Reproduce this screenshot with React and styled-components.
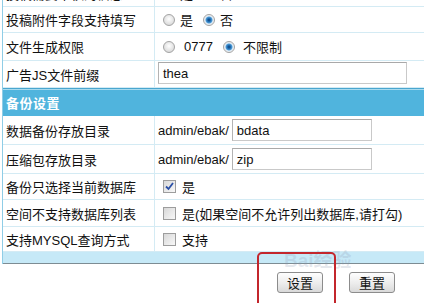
import React from "react";
import styled, { createGlobalStyle, css } from "styled-components";

const GlobalStyle = createGlobalStyle`
  html, body {
    margin: 0;
    padding: 0;
    background: #fff;
    overflow: hidden;
  }
  body {
    font-family: "Liberation Sans", "Noto Sans CJK SC", sans-serif;
    font-size: 13px;
    color: #111;
  }
`;

const StyledPage = styled.div`
  width: 440px;
  height: 303px;
  position: relative;
  overflow: hidden;
`;

const StyledTable = styled.div`
  margin-left: 2px;
  margin-top: -20px;
  border-left: 1px solid #8fcde6;
`;

const Row = styled.div`
  display: grid;
  grid-template-columns: 152px 1fr;
  height: ${({ $h }) => $h || 26}px;
  border-bottom: 1px solid #d4ebf4;
`;

const Label = styled.div`
  box-sizing: border-box;
  display: flex;
  align-items: center;
  padding-left: 3px;
  border-right: 1px solid #d4ebf4;
  white-space: nowrap;
`;

const Value = styled.div`
  display: flex;
  align-items: ${({ $top }) => ($top ? "flex-start" : "center")};
  padding-left: ${({ $pl }) => $pl ?? 8}px;
  padding-top: ${({ $top }) => $top || 0}px;
  white-space: nowrap;
`;

const Header = styled.div`
  height: 27px;
  border-top: 1px solid #4aa6cf;
  box-shadow: inset 0 1px 0 #a8dbef;
  background: #50b4dd;
  color: #fff;
  font-weight: bold;
  display: flex;
  align-items: center;
  padding-left: 3px;
  letter-spacing: 0.5px;
`;

const Band = styled.div`
  height: 11px;
  background: #c6e9f7;
  border-bottom: 1px solid #7d8c93;
`;

const Option = styled.label`
  display: flex;
  align-items: center;
  gap: ${({ $gap }) => $gap ?? 5}px;
  margin-right: ${({ $mr }) => $mr ?? 10}px;
`;

const Radio = styled.span`
  box-sizing: border-box;
  width: 12px;
  height: 12px;
  border-radius: 50%;
  border: 1px solid #a3a3a3;
  background: radial-gradient(circle at 50% 40%, #fff 0, #f0f0f0 30%, #cfcfcf 100%);
  ${({ $checked }) =>
    $checked &&
    css`
      background: radial-gradient(
        circle at 50% 50%,
        #0c3f75 0,
        #1d67ac 1.5px,
        #4c9bd6 3px,
        #cfe2f2 3.8px,
        #f4f4f4 5px
      );
    `}
`;

const Check = styled.span`
  box-sizing: border-box;
  width: 13px;
  height: 13px;
  border: 1px solid #9d9d9d;
  background: linear-gradient(135deg, #d8d8d8, #f8f8f8);
  display: flex;
  align-items: center;
  justify-content: center;
`;

const Input = styled.div`
  box-sizing: border-box;
  width: ${({ $w }) => $w}px;
  height: 22px;
  border: 1px solid #c9c9c9;
  border-top-color: #a9a9a9;
  border-left-color: #b3b3b3;
  background: #fff;
  padding-left: 4px;
  display: flex;
  align-items: center;
`;

const Prefix = styled.span`
  margin-right: 3px;
`;

const Footer = styled.div`
  display: flex;
  gap: 26px;
  padding: 8px 0 0 277px;
`;

const Button = styled.button`
  width: 46px;
  height: 21px;
  padding: 0;
  border: 1px solid #8c8c8c;
  border-radius: 3px;
  background: linear-gradient(#fefefe, #ececec 55%, #d9d9d9);
  font-family: "Noto Sans CJK SC", sans-serif;
  font-size: 13px;
  color: #111;
  line-height: 19px;
`;

const Highlight = styled.div`
  position: absolute;
  left: 257px;
  top: 252px;
  width: 79px;
  height: 62px;
  box-sizing: border-box;
  border: 2.5px solid #c3262c;
  border-radius: 5px;
  pointer-events: none;
`;

const Watermark = styled.div`
  position: absolute;
  left: 284px;
  top: 251px;
  color: rgba(140, 150, 175, 0.22);
  font-family: "Liberation Sans", "Noto Sans CJK SC", sans-serif;
  font-weight: bold;
  font-size: 19px;
  line-height: 20px;
  pointer-events: none;
`;

const CheckMark = () => (
  <svg width="9" height="9" viewBox="0 0 9 9">
    <path d="M1 4.5 L3.5 7 L8 1" fill="none" stroke="#2a4fa6" strokeWidth="1.8" />
  </svg>
);

const App = () => {
  return (
    <StyledPage>
      <GlobalStyle />
      <StyledTable>
        <Row $h={26}>
          <Label>投稿需要审核的信息</Label>
          <Value>
            <Option><Radio />是</Option>
            <Option><Radio $checked />否</Option>
          </Value>
        </Row>
        <Row $h={25}>
          <Label>投稿附件字段支持填写</Label>
          <Value>
            <Option><Radio />是</Option>
            <Option><Radio $checked />否</Option>
          </Value>
        </Row>
        <Row $h={27}>
          <Label>文件生成权限</Label>
          <Value>
            <Option $gap={9}><Radio />0777</Option>
            <Option $gap={8}><Radio $checked />不限制</Option>
          </Value>
        </Row>
        <Row $h={26}>
          <Label>广告JS文件前缀</Label>
          <Value $pl={3} $top={1}>
            <Input $w={249}>thea</Input>
          </Value>
        </Row>
        <Header>备份设置</Header>
        <Row $h={28}>
          <Label>数据备份存放目录</Label>
          <Value $pl={3}>
            <Prefix>admin/ebak/</Prefix>
            <Input $w={140}>bdata</Input>
          </Value>
        </Row>
        <Row $h={28}>
          <Label>压缩包存放目录</Label>
          <Value $pl={3}>
            <Prefix>admin/ebak/</Prefix>
            <Input $w={140}>zip</Input>
          </Value>
        </Row>
        <Row $h={25}>
          <Label>备份只选择当前数据库</Label>
          <Value>
            <Option $gap={6}>
              <Check><CheckMark /></Check>是
            </Option>
          </Value>
        </Row>
        <Row $h={26}>
          <Label>空间不支持数据库列表</Label>
          <Value>
            <Option $gap={6}>
              <Check />是(如果空间不允许列出数据库,请打勾)
            </Option>
          </Value>
        </Row>
        <Row $h={24}>
          <Label>支持MYSQL查询方式</Label>
          <Value>
            <Option $gap={6}>
              <Check />支持
            </Option>
          </Value>
        </Row>
        <Band />
      </StyledTable>
      <Footer>
        <Button>设置</Button>
        <Button>重置</Button>
      </Footer>
      <Watermark>Bai经验</Watermark>
      <Highlight />
    </StyledPage>
  );
};

export default App;
